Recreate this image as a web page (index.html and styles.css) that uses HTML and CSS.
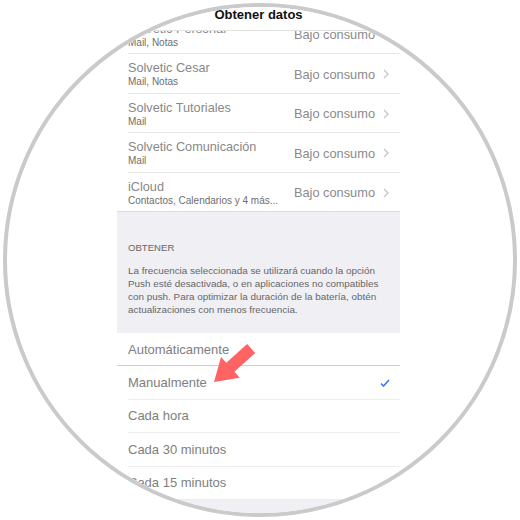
FILE: index.html
```html
<!DOCTYPE html>
<html lang="es">
<head>
    <meta charset="UTF-8">
    <meta name="viewport" content="width=device-width, initial-scale=1.0">
    <title>Obtener datos</title>
    <link rel="stylesheet" href="styles.css">
</head>
<body>
    <div class="lens">
        <div class="screen">
            <header class="nav-title">Obtener datos</header>
            <div class="accounts">
                <div class="account">
                    <div class="name">
                        <p class="title">Solvetic Personal</p>
                        <p class="sub">Mail, Notas</p>
                    </div>
                    <div class="value">Bajo consumo <svg class="chev" viewBox="0 0 6 10"><polyline points="1,1 5,5 1,9"/></svg></div>
                </div>
                <div class="account">
                    <div class="name">
                        <p class="title">Solvetic Cesar</p>
                        <p class="sub">Mail, Notas</p>
                    </div>
                    <div class="value">Bajo consumo <svg class="chev" viewBox="0 0 6 10"><polyline points="1,1 5,5 1,9"/></svg></div>
                </div>
                <div class="account">
                    <div class="name">
                        <p class="title">Solvetic Tutoriales</p>
                        <p class="sub">Mail</p>
                    </div>
                    <div class="value">Bajo consumo <svg class="chev" viewBox="0 0 6 10"><polyline points="1,1 5,5 1,9"/></svg></div>
                </div>
                <div class="account">
                    <div class="name">
                        <p class="title">Solvetic Comunicación</p>
                        <p class="sub">Mail</p>
                    </div>
                    <div class="value">Bajo consumo <svg class="chev" viewBox="0 0 6 10"><polyline points="1,1 5,5 1,9"/></svg></div>
                </div>
                <div class="account">
                    <div class="name">
                        <p class="title">iCloud</p>
                        <p class="sub">Contactos, Calendarios y 4 más...</p>
                    </div>
                    <div class="value">Bajo consumo <svg class="chev" viewBox="0 0 6 10"><polyline points="1,1 5,5 1,9"/></svg></div>
                </div>
            </div>
            <div class="note">
                <p class="note-head">OBTENER</p>
                <p class="note-text">La frecuencia seleccionada se utilizará cuando la opción<br>Push esté desactivada, o en aplicaciones no compatibles<br>con push. Para optimizar la duración de la batería, obtén<br>actualizaciones con menos frecuencia.</p>
            </div>
            <ul class="options">
                <li class="auto">Automáticamente</li>
                <li>Manualmente <svg class="check" viewBox="0 0 10 8"><polyline points="1,4.5 3.5,7 9,1"/></svg></li>
                <li>Cada hora</li>
                <li>Cada 30 minutos</li>
                <li class="last">Cada 15 minutos</li>
            </ul>
        </div>
        <svg class="arrow" width="60" height="60" viewBox="0 0 60 60">
            <polygon points="0,0 22,-14 22,-6 50,-6 50,6 22,6 22,14" transform="translate(14,42) rotate(-42)"/>
        </svg>
    </div>
</body>
</html>
```

FILE: styles.css
```css
body {
    margin: 0;
    background: #fff;
    font-family: "Liberation Sans", Arial, sans-serif;
}

.lens {
    position: relative;
    width: 506px;
    height: 506px;
    margin: 3px;
    border: 4px solid #cacaca;
    border-radius: 50%;
    overflow: hidden;
    background: #fff;
}

.screen {
    width: 283px;
    height: 100%;
    margin-left: 110px;
    background: #efeff4;
}

.nav-title {
    height: 23px;
    line-height: 16px;
    text-align: center;
    font-size: 13px;
    font-weight: bold;
    color: #111;
    background: #fff;
    border-bottom: 1px solid #e2e2e2;
}

.accounts {
    overflow: hidden;
    background: #fff;
}

.account {
    display: flex;
    align-items: center;
    justify-content: space-between;
    box-sizing: border-box;
    height: 39.5px;
    margin-left: 11px;
    padding: 2px 11px 0 0;
    border-bottom: 1px solid #e6e6e6;
}

.account:first-child {
    margin-top: -16.5px;
}

.account:last-child {
    margin-left: 0;
    padding-left: 11px;
    border-bottom-color: #dcdcdc;
}

.account p {
    margin: 0;
}

.account .title {
    font-size: 12.7px;
    line-height: 16px;
    color: #888;
}

.account .sub {
    font-size: 10px;
    line-height: 12px;
    color: #6e6e6e;
}

.value {
    display: flex;
    align-items: center;
    gap: 8px;
    font-size: 12.8px;
    color: #8a8a8a;
}

.chev {
    width: 6px;
    height: 10px;
    fill: none;
    stroke: #c4c4c8;
    stroke-width: 1.3;
}

.note {
    box-sizing: border-box;
    height: 121px;
    padding: 30px 11px 0;
    color: #666669;
}

.note-head {
    margin: 0 0 10px;
    font-size: 9.6px;
    line-height: 12px;
}

.note-text {
    margin: 0;
    font-size: 9.9px;
    line-height: 13px;
}

.options {
    list-style: none;
    margin: 0;
    padding: 0;
    background: #fff;
}

.options li {
    display: flex;
    align-items: center;
    justify-content: space-between;
    box-sizing: border-box;
    height: 33.4px;
    margin-left: 11px;
    padding-right: 10px;
    font-size: 13px;
    color: #7e7e7e;
    border-bottom: 1px solid #ececec;
}

.options li.auto,
.options li.last {
    margin-left: 0;
    padding-left: 11px;
}

.options li.auto {
    border-bottom-color: #cfcfcf;
}

.check {
    width: 10px;
    height: 8px;
    fill: none;
    stroke: #2f7cf6;
    stroke-width: 1.6;
}

.arrow {
    position: absolute;
    left: 193px;
    top: 333px;
    fill: #ff6464;
}
```
